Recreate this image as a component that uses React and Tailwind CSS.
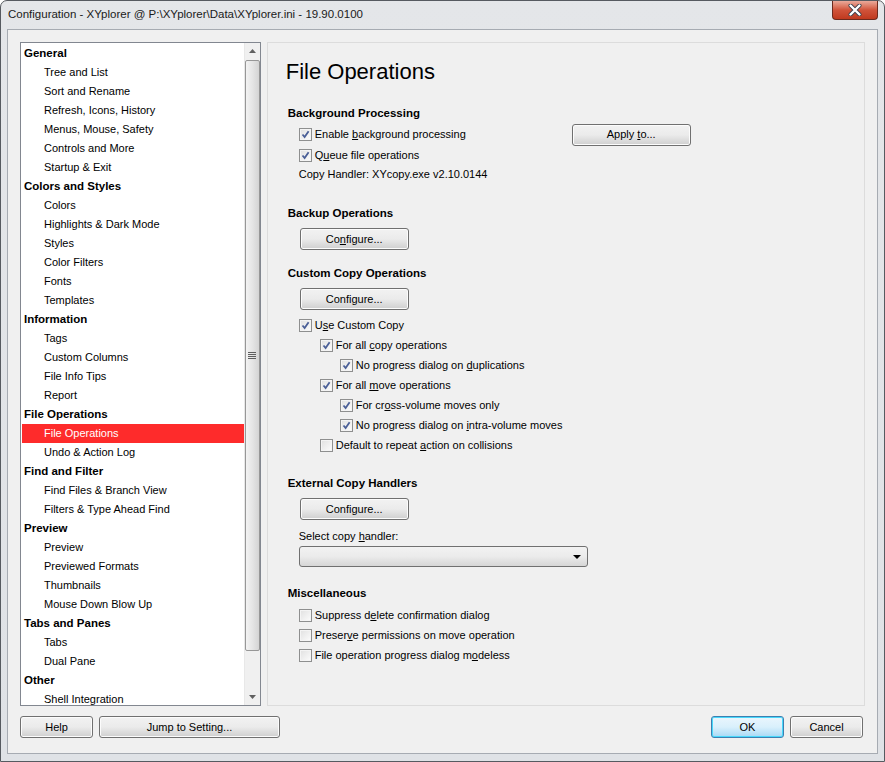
import React from 'react';

const tree = [
    { h: 'General' }, 'Tree and List', 'Sort and Rename', 'Refresh, Icons, History', 'Menus, Mouse, Safety', 'Controls and More', 'Startup & Exit',
    { h: 'Colors and Styles' }, 'Colors', 'Highlights & Dark Mode', 'Styles', 'Color Filters', 'Fonts', 'Templates',
    { h: 'Information' }, 'Tags', 'Custom Columns', 'File Info Tips', 'Report',
    { h: 'File Operations' }, 'File Operations', 'Undo & Action Log',
    { h: 'Find and Filter' }, 'Find Files & Branch View', 'Filters & Type Ahead Find',
    { h: 'Preview' }, 'Preview', 'Previewed Formats', 'Thumbnails', 'Mouse Down Blow Up',
    { h: 'Tabs and Panes' }, 'Tabs', 'Dual Pane',
    { h: 'Other' }, 'Shell Integration',
];

const Check = ({ checked }) => (
    <span className="w-[13px] h-[13px] shrink-0 border border-[#8e8f8f] bg-gradient-to-br from-[#dcdcdc] to-[#fbfbfb] flex items-center justify-center">
        <span className="w-[11px] h-[11px] border border-[#f4f4f4] bg-gradient-to-br from-[#e3e3e3] to-[#fafafa] flex items-center justify-center">
            {checked && (
                <svg width="9" height="9" viewBox="0 0 9 9">
                    <path d="M1.5 4.5 L3.6 7 L7.6 1.2" fill="none" stroke="#4a5f97" strokeWidth="1.8" />
                </svg>
            )}
        </span>
    </span>
);

const CheckRow = ({ checked, indent = 'ml-[11px]', children, h = 'h-[20px]' }) => (
    <div className={`flex items-center gap-[3px] ${h} ${indent}`}>
        <Check checked={checked} />
        <span>{children}</span>
    </div>
);

const Btn = ({ children, className = '' }) => (
    <div className={`h-[22px] flex items-center justify-center rounded-[3px] border border-[#707070] bg-gradient-to-b from-[#f2f2f2] via-[#ebebeb] to-[#cfcfcf] shadow-[inset_0_0_0_1px_#fcfcfc] ${className}`}>
        <span>{children}</span>
    </div>
);

const Heading = ({ children, className = '' }) => (
    <div className={`h-[20px] leading-[20px] font-bold text-[11.5px] ${className}`}>{children}</div>
);

export default function App() {
    return (
        <div className="w-[885px] h-[762px] flex flex-col bg-gradient-to-b from-[#e4e6e9] to-[#dfe2e6] border border-[#565a60] rounded-t-[7px] text-[11px] text-black relative overflow-hidden" style={{ fontFamily: '"Liberation Sans", Arial, sans-serif' }}>
            {/* Title bar */}
            <div className="h-[28px] flex items-center pl-[7px] text-[11.5px] text-[#1a1a1a] shrink-0">
                Configuration - XYplorer @ P:\XYplorer\Data\XYplorer.ini - 19.90.0100
            </div>
            <div className="absolute top-0 right-[6px] w-[46px] h-[19px] rounded-b-[4px] border border-t-0 border-[#6b2a1e] bg-gradient-to-b from-[#e9a99a] via-[#d0533a] to-[#c0391e] flex items-center justify-center">
                <svg width="14" height="12" viewBox="0 0 14 12">
                    <path d="M2.5 1.5 L11.5 10.5 M11.5 1.5 L2.5 10.5" stroke="#3a3f4a" strokeWidth="4" strokeLinecap="round" />
                    <path d="M2.5 1.5 L11.5 10.5 M11.5 1.5 L2.5 10.5" stroke="#ffffff" strokeWidth="2.4" strokeLinecap="round" />
                </svg>
            </div>

            {/* Client area */}
            <div className="flex-1 mx-[6px] mb-[7px] border border-[#a6abb2] bg-[#f0f0f0] flex flex-col px-[12px] pt-[12px]">
                <div className="flex gap-[6px] h-[664px]">
                    {/* Tree */}
                    <div className="w-[241px] border border-[#828790] bg-white flex">
                        <div className="flex-1 overflow-hidden pl-px pt-[1px]">
                            {tree.map((t, i) =>
                                typeof t === 'object' ? (
                                    <div key={i} className="h-[19px] leading-[19px] pl-[2px] font-bold text-[11.5px]">{t.h}</div>
                                ) : (
                                    <div key={i} className={`h-[19px] leading-[19px] pl-[22px] ${i === 20 ? 'bg-[#fe2b2b] text-white' : ''}`}>{t}</div>
                                )
                            )}
                        </div>
                        {/* Scrollbar */}
                        <div className="w-[16px] bg-[#f0f0f0] border-l border-[#e8e8e8] flex flex-col items-center">
                            <div className="h-[16px] flex items-center justify-center">
                                <svg width="7" height="4" viewBox="0 0 7 4"><path d="M0 4 L3.5 0 L7 4 Z" fill="#606060" /></svg>
                            </div>
                            <div className="w-[15px] h-[591px] mt-px rounded-[2px] border border-[#979797] bg-gradient-to-r from-[#f3f3f3] via-[#e5e5e5] to-[#d4d4d4] flex items-center justify-center">
                                <svg width="8" height="7" viewBox="0 0 8 7">
                                    <path d="M0 0.5 H8 M0 2.5 H8 M0 4.5 H8 M0 6.5 H8" stroke="#5f5f5f" strokeWidth="1" />
                                </svg>
                            </div>
                            <div className="flex-1" />
                            <div className="h-[16px] flex items-center justify-center">
                                <svg width="7" height="4" viewBox="0 0 7 4"><path d="M0 0 L3.5 4 L7 0 Z" fill="#606060" /></svg>
                            </div>
                        </div>
                    </div>

                    {/* Settings page */}
                    <div className="w-[599px] border border-[#dcdcdc] pl-[20px] pt-[14px]">
                        <div className="h-[30px] leading-[30px] text-[22px] -ml-[2px]">File Operations</div>

                        <Heading className="mt-[16px]">Background Processing</Heading>
                        <div className="flex items-center h-[21px] mt-[1px]">
                            <div className="w-[284px]">
                                <CheckRow checked h="h-[21px]">Enable <u>b</u>ackground processing</CheckRow>
                            </div>
                            <Btn className="w-[119px]">Apply <u>t</u>o...</Btn>
                        </div>
                        <CheckRow checked>Q<u>u</u>eue file operations</CheckRow>
                        <div className="h-[19px] leading-[19px] ml-[11px]">Copy Handler: XYcopy.exe v2.10.0144</div>

                        <Heading className="mt-[19px]">Backup Operations</Heading>
                        <Btn className="w-[109px] ml-[12px] mt-[5px]">Co<u>n</u>figure...</Btn>

                        <Heading className="mt-[13px]">Custom Copy Operations</Heading>
                        <Btn className="w-[109px] ml-[12px] mt-[5px]">Configure...</Btn>
                        <div className="mt-[5px]">
                            <CheckRow checked>U<u>s</u>e Custom Copy</CheckRow>
                            <CheckRow checked indent="ml-[32px]">For all <u>c</u>opy operations</CheckRow>
                            <CheckRow checked indent="ml-[52px]">No progress dialog on <u>d</u>uplications</CheckRow>
                            <CheckRow checked indent="ml-[32px]">For all <u>m</u>ove operations</CheckRow>
                            <CheckRow checked indent="ml-[52px]">For cr<u>o</u>ss-volume moves only</CheckRow>
                            <CheckRow checked indent="ml-[52px]">No progress dialog on <u>i</u>ntra-volume moves</CheckRow>
                            <CheckRow indent="ml-[32px]">Default to repeat <u>a</u>ction on collisions</CheckRow>
                        </div>

                        <Heading className="mt-[18px]">External Copy Handlers</Heading>
                        <Btn className="w-[109px] ml-[12px] mt-[5px]">Configure...</Btn>
                        <div className="h-[18px] leading-[18px] ml-[11px] mt-[7px]">Select copy <u>h</u>andler:</div>
                        <div className="w-[289px] h-[21px] ml-[11px] mt-[1px] rounded-[3px] border border-[#707070] bg-gradient-to-b from-[#f2f2f2] via-[#ebebeb] to-[#d6d6d6] flex items-center justify-end pr-[6px]">
                            <svg width="8" height="4" viewBox="0 0 8 4"><path d="M0 0 L4 4 L8 0 Z" fill="#000" /></svg>
                        </div>

                        <Heading className="mt-[16px]">Miscellaneous</Heading>
                        <div className="mt-[2px]">
                            <CheckRow>Suppress d<u>e</u>lete confirmation dialog</CheckRow>
                            <CheckRow>Preser<u>v</u>e permissions on move operation</CheckRow>
                            <CheckRow>File operation progress dialog m<u>o</u>deless</CheckRow>
                        </div>
                    </div>
                </div>

                {/* Bottom buttons */}
                <div className="flex items-center mt-[10px]">
                    <Btn className="w-[73px]">Help</Btn>
                    <Btn className="w-[181px] ml-[6px]">Jump to Setting...</Btn>
                    <div className="flex-1" />
                    <div className="w-[73px] h-[22px] flex items-center justify-center rounded-[3px] border border-[#3c7fb1] bg-gradient-to-b from-[#eaf6fd] via-[#d9f0fc] to-[#a7d9f5] shadow-[inset_0_0_0_1px_#48d8fb]">OK</div>
                    <Btn className="w-[73px] ml-[6px] mr-[2px]">Cancel</Btn>
                </div>
            </div>
        </div>
    );
}
